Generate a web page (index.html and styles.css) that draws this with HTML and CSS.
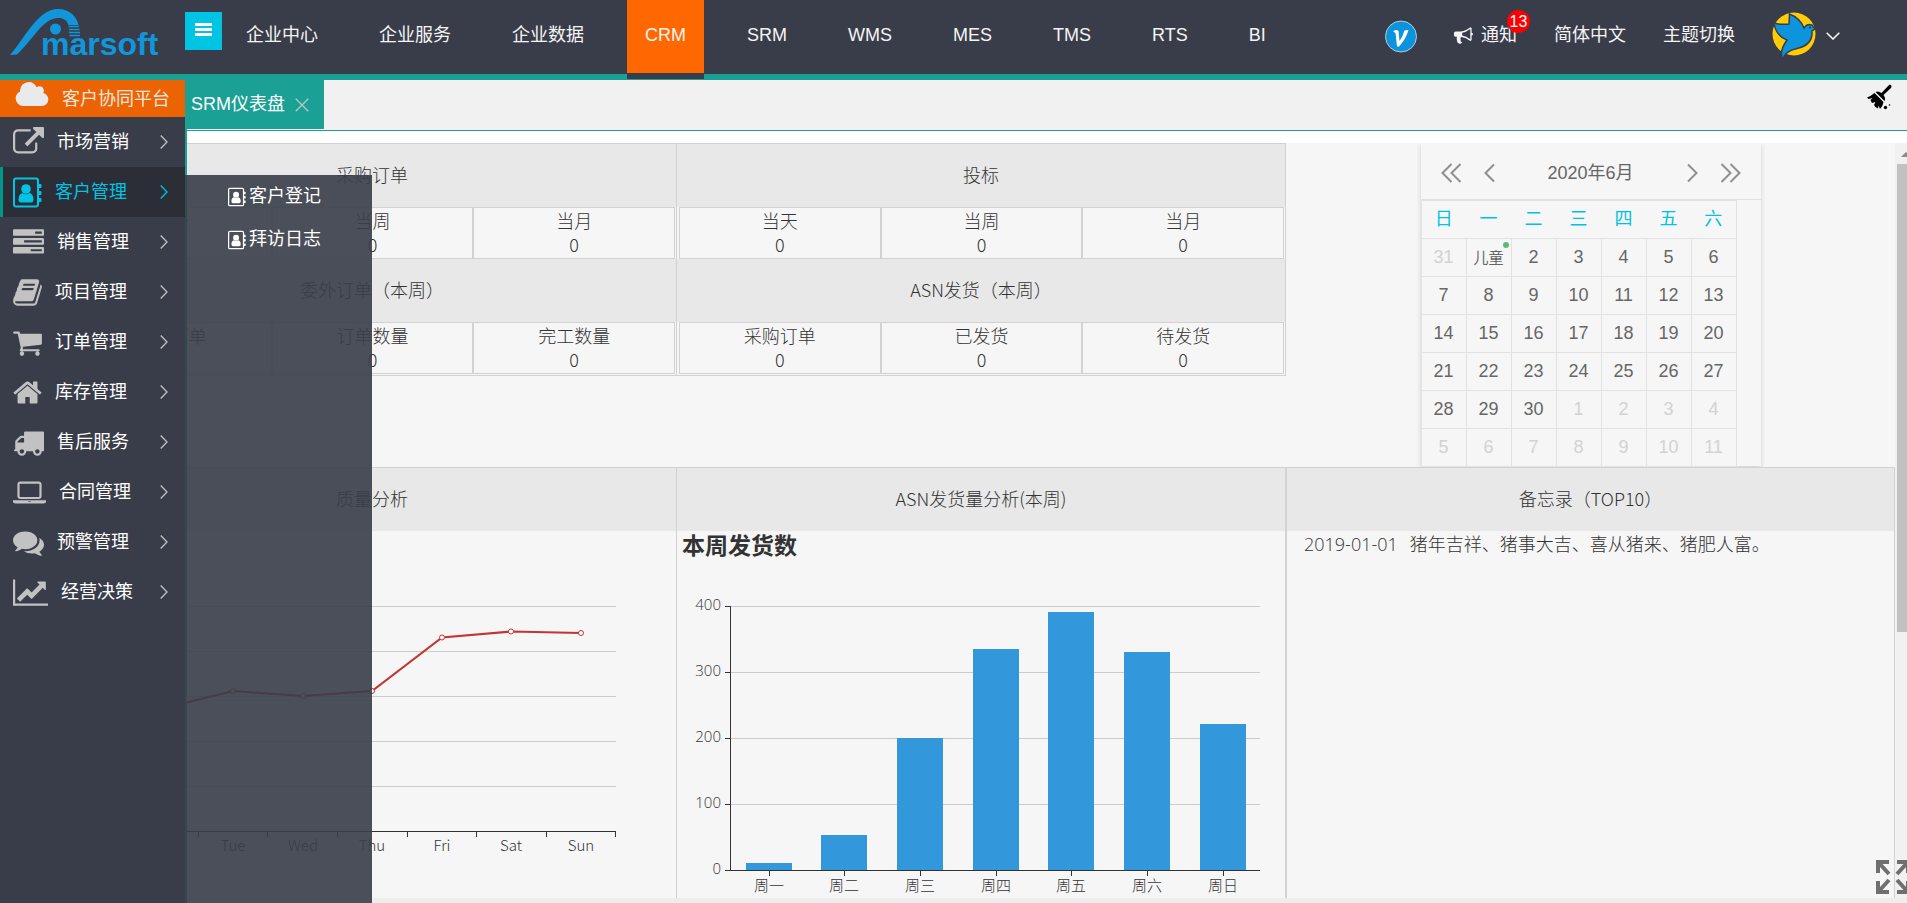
FILE: index.html
```html
<!DOCTYPE html>
<html lang="zh-CN">
<head>
<meta charset="utf-8">
<title>SRM仪表盘</title>
<link rel="stylesheet" href="styles.css">
</head>
<body>
<svg class="defs" aria-hidden="true">
  <symbol id="i-contact" viewBox="0 0 29 31">
    <rect x="1" y="1.500" width="24" height="28" rx="2" fill="none" stroke="currentColor" stroke-width="2"/>
    <path d="M25 7h2.500q1 0 1 1v2q0 1-1 1H25zM25 14h2.500q1 0 1 1v2q0 1-1 1H25zM25 21h2.500q1 0 1 1v2q0 1-1 1H25z" fill="currentColor"/>
    <circle cx="13" cy="12" r="4.800" fill="currentColor"/>
    <path d="M9.500 16q3.500 2.500 7 0q4 1 4 6.500q0 3-2.500 3h-10q-2.500 0-2.500-3q0-5.500 4-6.500z" fill="currentColor"/>
  </symbol>
  <symbol id="i-next" viewBox="0 0 8 16"><path d="M.7 1.500L7 8L.7 14.500" fill="none" stroke="currentColor" stroke-width="1.300"/></symbol>
</svg>

<header class="topbar">
  <svg class="logo" width="185" height="74" viewBox="0 0 185 74" role="img" aria-label="Amarsoft">
    <path d="M10 55C25 38 38 9 58 9C70 9 77 17 78.500 25H68.500C67 20 63 17.500 57 18C43 19 35 37 17 54.500z" fill="#1296db"/>
    <path d="M68.500 26.500h10.500M69 29.500h10.500M69 32.500h11M69.500 35.500h10.500" stroke="#1296db" stroke-width="1.600"/>
    <circle cx="55.500" cy="29" r="5.500" fill="#1296db"/>
    <text x="41" y="55" class="logo-text">marsoft</text>
  </svg>
  <button class="toggle" aria-label="折叠菜单"><span></span><span></span><span></span></button>
  <nav class="nav">
    <a href="#">企业中心</a><a href="#">企业服务</a><a href="#">企业数据</a><a href="#" class="on">CRM</a><a href="#">SRM</a><a href="#">WMS</a><a href="#">MES</a><a href="#">TMS</a><a href="#">RTS</a><a href="#">BI</a>
  </nav>
  <div class="tools">
    <svg width="32" height="34" viewBox="0 0 32 34"><circle cx="16" cy="17.500" r="15.500" fill="#0b93dd" stroke="#b9cbd6"/><path d="M8 12.500Q11.500 10 13.500 12L14.500 22Q18.500 16 19 12Q21 10.500 23.500 11Q21 20 14 27.500H12L10.500 14Z" fill="#fff"/></svg>
    <a href="#" class="notice"><svg width="19" height="19" viewBox="0 0 1792 1792"><path fill="currentColor" d="M1664 640q53 0 90.500 37.500t37.500 90.500-37.500 90.500-90.500 37.500v384q0 52-38 90t-90 38q-417-347-812-380-58 19-91 66t-31 100.500 40 92.500q-20 33-23 65.500t6 58 33.500 55 48 50 61.500 50.500q-29 58-111.500 83t-168.500 11.500-132-55.500q-7-23-29.500-87.500t-32-94.500-23-89-15-101 3.500-98.500 22-110.500h-122q-66 0-113-47t-47-113v-192q0-66 47-113t113-47h480q435 0 896-384 52 0 90 38t38 90v384zm-128 604v-954q-394 302-768 343v270q377 42 768 341z"/></svg>通知<span class="badge">13</span></a>
    <a href="#">简体中文</a>
    <a href="#">主题切换</a>
    <a href="#" class="user" aria-label="用户">
      <svg width="44" height="48" viewBox="0 0 44 48"><circle cx="22" cy="22" r="21.500" fill="#ffcc05"/><path d="M2 11Q9 13 17 12L17.500 2Q28 6 32 16Q35 11 40 13L43 17L40 19Q41 33 25 36.500Q13 39 10.500 47.500Q7 39 15 28Q4 24 2 11z" fill="#0c94dc" stroke="#393d49" stroke-width="1.500"/><circle cx="38" cy="15.500" r="1" fill="#123"/></svg>
      <svg width="14" height="8" viewBox="0 0 14 8"><path d="M.7.8L7 7L13.300.8" fill="none" stroke="#fff" stroke-width="1.500"/></svg>
    </a>
  </div>
</header>

<div class="body">
  <aside class="side">
    <h1 class="platform"><svg width="34" height="24" viewBox="0 128 1920 1408"><path fill="#e8eaee" d="M1920 1152q0 159-112.500 271.500t-271.500 112.500h-1088q-185 0-316.500-131.500t-131.500-316.500q0-130 70-240t188-165q-2-30-2-43 0-212 150-362t362-150q156 0 283.500 87t185.500 225q71-62 166-62 106 0 181 75t75 181q0 76-41 138 130 31 213.500 135.500t88.500 251.500z"/></svg>客户协同平台</h1>
    <nav class="menu">
      <a href="#"><svg width="31" height="31" viewBox="0 0 1792 1792"><path fill="currentColor" d="M1408 928v320q0 119-84.500 203.500t-203.500 84.500h-832q-119 0-203.500-84.500t-84.500-203.500v-832q0-119 84.500-203.500t203.500-84.500h704q14 0 23 9t9 23v64q0 14-9 23t-23 9h-704q-66 0-113 47t-47 113v832q0 66 47 113t113 47h832q66 0 113-47t47-113v-320q0-14 9-23t23-9h64q14 0 23 9t9 23zm384-864v512q0 26-19 45t-45 19-45-19l-176-176-652 652q-10 10-23 10t-23-10l-114-114q-10-10-10-23t10-23l652-652-176-176q-19-19-19-45t19-45 45-19h512q26 0 45 19t19 45z"/></svg><span>市场营销</span><svg class="next"><use href="#i-next"/></svg></a>
      <a href="#" class="on"><svg width="29" height="31"><use href="#i-contact"/></svg><span>客户管理</span><svg class="next"><use href="#i-next"/></svg></a>
      <a href="#"><svg width="31" height="31" viewBox="0 0 1792 1792"><path fill="currentColor" d="M1024 1408h640v-128h-640v128zm-384-512h1024v-128h-1024v128zm640-512h384v-128h-384v128zm512 832v256q0 26-19 45t-45 19h-1664q-26 0-45-19t-19-45v-256q0-26 19-45t45-19h1664q26 0 45 19t19 45zm0-512v256q0 26-19 45t-45 19h-1664q-26 0-45-19t-19-45v-256q0-26 19-45t45-19h1664q26 0 45 19t19 45zm0-512v256q0 26-19 45t-45 19h-1664q-26 0-45-19t-19-45v-256q0-26 19-45t45-19h1664q26 0 45 19t19 45z"/></svg><span>销售管理</span><svg class="next"><use href="#i-next"/></svg></a>
      <a href="#"><svg width="29" height="31" viewBox="64 0 1664 1792"><path fill="currentColor" d="M1703 478q40 57 18 129l-275 906q-19 64-76.500 107.500t-122.500 43.500h-923q-77 0-148.500-53.500t-99.500-131.500q-24-67-2-127 0-4 3-27t4-37q1-8-3-21.500t-3-19.500q2-11 8-21t16.500-23.500 16.500-23.500q23-38 45-91.500t30-91.500q3-10 .5-30t-.5-28q3-11 17-28t17-23q21-36 42-92t25-90q1-9-2.500-32t.5-28q4-13 22-30.500t22-22.500q19-26 42.500-84.500t27.500-96.500q1-8-3-25.500t-2-26.500q2-8 9-18t18-23 17-21q8-12 16.500-30.500t15-35 16-36 19.500-32 26.500-23.500 36-11.500 47.500 5.500l-1 3q38-9 51-9h761q74 0 114 56t18 130l-274 906q-36 119-71.500 153.500t-128.500 34.500h-869q-27 0-38 15-11 16-1 43 24 70 144 70h923q29 0 56-15.500t35-41.500l300-987q7-22 5-57 38 15 59 43zm-1064 2q-4 13 2 22.500t20 9.500h608q13 0 25.500-9.500t16.500-22.500l21-64q4-13-2-22.500t-20-9.500h-608q-13 0-25.500 9.500t-16.500 22.500zm-83 256q-4 13 2 22.500t20 9.500h608q13 0 25.500-9.500t16.500-22.500l21-64q4-13-2-22.500t-20-9.500h-608q-13 0-25.500 9.500t-16.500 22.500z"/></svg><span>项目管理</span><svg class="next"><use href="#i-next"/></svg></a>
      <a href="#"><svg width="29" height="31" viewBox="64 0 1664 1792"><path fill="currentColor" d="M704 1536q0 52-38 90t-90 38-90-38-38-90 38-90 90-38 90 38 38 90zm896 0q0 52-38 90t-90 38-90-38-38-90 38-90 90-38 90 38 38 90zm128-1088v512q0 24-16.500 42.500t-40.500 21.500l-1044 122q13 60 13 70 0 16-24 64h920q26 0 45 19t19 45-19 45-45 19h-1024q-26 0-45-19t-19-45q0-11 8-31.500t16-36 21.500-40 15.500-29.500l-177-823h-204q-26 0-45-19t-19-45 19-45 45-19h256q16 0 28.500 6.500t19.500 15.500 13 24.500 8 26 5.500 29.500 4.500 26h1201q26 0 45 19t19 45z"/></svg><span>订单管理</span><svg class="next"><use href="#i-next"/></svg></a>
      <a href="#"><svg width="29" height="31" viewBox="64 0 1664 1792"><path fill="currentColor" d="M1472 992v480q0 26-19 45t-45 19h-384v-384h-256v384h-384q-26 0-45-19t-19-45v-480q0-1 .5-3t.5-3l575-474 575 474q1 2 1 6zm223-69l-62 74q-8 9-21 11h-3q-13 0-21-7l-692-577-692 577q-12 8-24 7-13-2-21-11l-62-74q-8-10-7-23.500t11-21.500l719-599q32-26 76-26t76 26l244 204v-195q0-14 9-23t23-9h192q14 0 23 9t9 23v408l219 182q10 8 11 21.500t-7 23.500z"/></svg><span>库存管理</span><svg class="next"><use href="#i-next"/></svg></a>
      <a href="#"><svg width="31" height="31" viewBox="0 0 1792 1792"><path fill="currentColor" d="M640 1408q0-52-38-90t-90-38-90 38-38 90 38 90 90 38 90-38 38-90zm-384-512h384v-256h-158q-13 0-22 9l-195 195q-9 9-9 22v30zm1280 512q0-52-38-90t-90-38-90 38-38 90 38 90 90 38 90-38 38-90zm256-1088v1024q0 15-4 26.500t-13.500 18.500-16.500 11.500-23.500 6-22.500 2-25.500 0-22.500-.5q0 106-75 181t-181 75-181-75-75-181h-384q0 106-75 181t-181 75-181-75-75-181h-64q-3 0-22.500.5t-25.500 0-22.500-2-23.500-6-16.500-11.500-13.500-18.500-4-26.500q0-26 19-45t45-19v-320q0-8-.5-35t0-38 2.500-34.500 6.500-37 14-30.500 22.500-30l198-198q19-19 50.500-32t58.500-13h160v-192q0-26 19-45t45-19h1024q26 0 45 19t19 45z"/></svg><span>售后服务</span><svg class="next"><use href="#i-next"/></svg></a>
      <a href="#"><svg width="33" height="31" viewBox="0 0 1920 1792"><path fill="currentColor" d="M416 1280q-66 0-113-47t-47-113v-704q0-66 47-113t113-47h1088q66 0 113 47t47 113v704q0 66-47 113t-113 47h-1088zm-32-864v704q0 13 9.500 22.500t22.500 9.500h1088q13 0 22.500-9.500t9.500-22.500v-704q0-13-9.500-22.500t-22.500-9.500h-1088q-13 0-22.500 9.500t-9.500 22.500zm1376 928h160v96q0 40-47 68t-113 28h-1600q-66 0-113-28t-47-68v-96h1760zm-720 96q16 0 16-16t-16-16h-160q-16 0-16 16t16 16h160z"/></svg><span>合同管理</span><svg class="next"><use href="#i-next"/></svg></a>
      <a href="#"><svg width="31" height="31" viewBox="0 0 1792 1792"><path fill="currentColor" d="M1408 768q0 139-94 257t-256.500 186.500-353.500 68.500q-86 0-176-16-124 88-278 128-36 9-86 16h-3q-11 0-20.500-8t-11.500-21q-1-3-1-6.500t.5-6.500 2-6l2.500-5 3.500-5.500 4-5 4.500-5 4-4.500q5-6 23-25t26-29.500 22.500-29 25-38.500 20.500-44q-124-72-195-177t-71-224q0-139 94-257t256.500-186.500 353.500-68.500 353.500 68.500 256.500 186.500 94 257zm384 256q0 120-71 224.500t-195 176.500q10 24 20.500 44t25 38.500 22.500 29 26 29.500 23 25q1 1 4 4.500t4.500 5 4 5 3.500 5.500l2.500 5 2 6 .5 6.500-1 6.500q-3 14-13 22t-22 7q-50-7-86-16-154-40-278-128-90 16-176 16-271 0-472-132 58 4 88 4 161 0 309-45t264-129q125-92 192-212t67-254q0-77-23-152 129 71 204 178t75 230z"/></svg><span>预警管理</span><svg class="next"><use href="#i-next"/></svg></a>
      <a href="#"><svg width="35" height="31" viewBox="0 0 2048 1792"><path fill="currentColor" d="M2048 1536v128h-2048v-1536h128v1408h1920zm-128-1248v435q0 21-19.500 29.500t-35.500-7.500l-121-121-633 633q-10 10-23 10t-23-10l-233-233-416 416-192-192 585-585q10-10 23-10t23 10l233 233 464-464-121-121q-16-16-7.500-35.500t29.500-19.500h435q14 0 23 9t9 23z"/></svg><span>经营决策</span><svg class="next"><use href="#i-next"/></svg></a>
    </nav>
    <div class="submenu">
      <a href="#"><svg width="18" height="20"><use href="#i-contact"/></svg>客户登记</a>
      <a href="#"><svg width="18" height="20"><use href="#i-contact"/></svg>拜访日志</a>
    </div>
  </aside>

  <main class="main">
    <div class="tabs">
      <div class="tab">SRM仪表盘<button aria-label="关闭"><svg width="14" height="14" viewBox="0 0 14 14"><path d="M.7.7l12.600 12.600M13.300.7L.7 13.300" stroke="#b7c9c6" stroke-width="1.300"/></svg></button></div>
      <button class="clean" aria-label="清理"><svg width="25" height="26" viewBox="0 0 25 26"><path d="M22.500.5Q25.500 1 24 4L16.500 11Q19 14 17.500 17L8.500 8Q11.500 6.500 14.500 9z"/><path d="M7.500 9L16.500 18Q16 22 13 25L11.500 21.500L11 24.500Q8 23.500 7 21L8.500 18L5 19L3.500 16L5.500 14L1.500 15L0 13.500Q4 12 7.500 9z"/><circle cx="18.500" cy="23.500" r="1.700"/><circle cx="22.500" cy="21" r=".8"/></svg></button>
    </div>
    <div class="view">
      <div class="board">
        <section class="top">
          <div class="stats">
            <h2>采购订单</h2>
            <div class="cells"><p>当天<br>0</p><p>当周<br>0</p><p>当月<br>0</p></div>
            <h2>委外订单（本周）</h2>
            <div class="cells"><p>委外订单<br>0</p><p>订单数量<br>0</p><p>完工数量<br>0</p></div>
          </div>
          <div class="stats">
            <h2>投标</h2>
            <div class="cells"><p>当天<br>0</p><p>当周<br>0</p><p>当月<br>0</p></div>
            <h2>ASN发货（本周）</h2>
            <div class="cells"><p>采购订单<br>0</p><p>已发货<br>0</p><p>待发货<br>0</p></div>
          </div>
          <div class="calendar">
            <div class="cal-head">
              <button aria-label="上一年"><svg width="21" height="20" viewBox="0 0 21 20"><path d="M10.500 1L1.500 10L10.500 19M19.500 1L10.500 10L19.500 19"/></svg></button>
              <button aria-label="上一月"><svg width="11" height="20" viewBox="0 0 11 20"><path d="M10 1.500L1.500 10L10 18.500"/></svg></button>
              <span>2020年6月</span>
              <button aria-label="下一月"><svg width="11" height="20" viewBox="0 0 11 20"><path d="M1 1.500L9.500 10L1 18.500"/></svg></button>
              <button aria-label="下一年"><svg width="21" height="20" viewBox="0 0 21 20"><path d="M1.500 1L10.500 10L1.500 19M10.500 1L19.500 10L10.500 19"/></svg></button>
            </div>
            <table>
              <thead><tr><th>日</th><th>一</th><th>二</th><th>三</th><th>四</th><th>五</th><th>六</th></tr></thead>
              <tbody>
                <tr><td class="off">31</td><td class="fest">儿童<i></i></td><td>2</td><td>3</td><td>4</td><td>5</td><td>6</td></tr>
                <tr><td>7</td><td>8</td><td>9</td><td>10</td><td>11</td><td>12</td><td>13</td></tr>
                <tr><td>14</td><td>15</td><td>16</td><td>17</td><td>18</td><td>19</td><td>20</td></tr>
                <tr><td>21</td><td>22</td><td>23</td><td>24</td><td>25</td><td>26</td><td>27</td></tr>
                <tr><td>28</td><td>29</td><td>30</td><td class="off">1</td><td class="off">2</td><td class="off">3</td><td class="off">4</td></tr>
                <tr><td class="off">5</td><td class="off">6</td><td class="off">7</td><td class="off">8</td><td class="off">9</td><td class="off">10</td><td class="off">11</td></tr>
              </tbody>
            </table>
          </div>
        </section>
        <section class="bottom">
          <div class="panel">
            <h2>质量分析</h2>
            <svg class="chart" width="606" height="366" viewBox="2 0 606 366">
              <path class="grid" d="M60 75.500H550M60 120.500H550M60 165.500H550M60 210.500H550M60 255.500H550"/>
              <path class="axis" d="M60 300.500H550M132.500 300v6M201.500 300v6M271.500 300v6M341.500 300v6M410.500 300v6M480.500 300v6M549.500 300v6"/>
              <polyline points="98,177 167,160 237,165 306,160 376,106.500 445,100.500 515,102" fill="none" stroke="#c23531" stroke-width="2.200"/>
              <g fill="#fff" stroke="#c23531"><circle cx="98" cy="177" r="2.500"/><circle cx="167" cy="160" r="2.500"/><circle cx="237" cy="165" r="2.500"/><circle cx="306" cy="160" r="2.500"/><circle cx="376" cy="106.500" r="2.500"/><circle cx="445" cy="100.500" r="2.500"/><circle cx="515" cy="102" r="2.500"/></g>
              <g class="mid"><text x="98" y="320">Mon</text><text x="167" y="320">Tue</text><text x="237" y="320">Wed</text><text x="306" y="320">Thu</text><text x="376" y="320">Fri</text><text x="445" y="320">Sat</text><text x="515" y="320">Sun</text></g>
            </svg>
          </div>
          <div class="panel">
            <h2>ASN发货量分析(本周)</h2>
            <svg class="chart" width="607" height="366" viewBox="1 0 607 366">
              <text class="title" x="6" y="23">本周发货数</text>
              <path class="grid" d="M54 75.500H584M54 141.500H584M54 207.500H584M54 273.500H584"/>
              <g fill="#3398db"><rect x="70" y="332" width="46" height="7"/><rect x="145" y="304" width="46" height="35"/><rect x="221" y="207" width="46" height="132"/><rect x="297" y="118" width="46" height="221"/><rect x="372" y="81" width="46" height="258"/><rect x="448" y="121" width="46" height="218"/><rect x="524" y="193" width="46" height="146"/></g>
              <path class="axis" d="M54.500 75V339M49 75.500h5M49 141.500h5M49 207.500h5M49 273.500h5M49 339.500H584M93.500 339v6M168.500 339v6M244.500 339v6M320.500 339v6M395.500 339v6M471.500 339v6M547.500 339v6"/>
              <g class="end"><text x="45" y="79">400</text><text x="45" y="145">300</text><text x="45" y="211">200</text><text x="45" y="277">100</text><text x="45" y="343">0</text></g>
              <g class="mid"><text x="93" y="360">周一</text><text x="168" y="360">周二</text><text x="244" y="360">周三</text><text x="320" y="360">周四</text><text x="395" y="360">周五</text><text x="471" y="360">周六</text><text x="547" y="360">周日</text></g>
            </svg>
          </div>
          <div class="panel">
            <h2>备忘录（TOP10）</h2>
            <p class="memo"><time>2019-01-01</time>猪年吉祥、猪事大吉、喜从猪来、猪肥人富。</p>
          </div>
        </section>
      </div>
      <div class="scrollbar"><span class="up"></span><span class="thumb"></span></div>
      <button class="expand" aria-label="全屏"><svg width="34" height="34" viewBox="0 0 34 34"><g fill="none" stroke="#6f6f6f" stroke-width="4"><path d="M2 13V2H13M3 3L13 14M21 2H32V13M31 3L21 14M2 21V32H13M3 31L13 20M21 32H32V21M31 31L21 20"/></g></svg></button>
    </div>
  </main>
</div>
</body>
</html>
```
FILE: styles.css
```css
* { box-sizing: border-box; margin: 0; padding: 0; }
body {
  height: 100vh; display: flex; flex-direction: column; overflow: hidden;
  font: 18px/25px "Liberation Sans", "Noto Sans CJK SC", sans-serif;
  color: #333; background: #fff;
}
a { color: inherit; text-decoration: none; }
button { border: 0; background: none; font: inherit; cursor: pointer; }
svg { flex: none; display: block; }
.defs { position: absolute; width: 0; height: 0; }

.topbar { flex: none; height: 80px; display: flex; background: #393d49; border-bottom: 6px solid #1aa094; color: #f4f4f5; }
.logo-text { font: bold 32px "Liberation Sans", sans-serif; fill: #1296db; }
.toggle { width: 37px; height: 38px; margin-top: 12px; background: #00c4e3; display: flex; flex-direction: column; align-items: center; gap: 2px; padding-top: 11px; }
.toggle span { width: 17px; height: 3px; background: #fff; }
.nav { display: flex; gap: 25px; margin-left: 6px; }
.nav a { height: 79px; padding: 0 18px; line-height: 71px; border-bottom: 6px solid transparent; white-space: nowrap; }
.nav .on { background: #ff6700 padding-box; border-color: #393d49; position: relative; }
.tools { margin-left: auto; display: flex; gap: 37px; padding-right: 67px; height: 71px; align-items: center; white-space: nowrap; }
.notice { position: relative; display: flex; align-items: center; gap: 8px; }
.badge { position: absolute; left: 53px; top: -13px; width: 23px; height: 23px; border-radius: 50%; background: #f00; color: #fff; font-size: 16px; line-height: 23px; text-align: center; }
.user { display: flex; align-items: center; gap: 10px; }

.body { flex: 1; min-height: 0; display: flex; }
.side { position: relative; z-index: 2; width: 185px; flex: none; background: #393d49; }
.platform { height: 37px; display: flex; gap: 13px; align-items: flex-start; padding: 2px 0 0 15px; background: #ec6304; color: #f4e6dc; font-size: 18px; font-weight: 400; line-height: 35px; white-space: nowrap; }
.menu a { height: 50px; display: flex; align-items: center; gap: 13px; padding: 0 17px 0 13px; color: #c2c2c2; }
.menu span { flex: 1; color: #fff; white-space: nowrap; }
.menu .on { background: #2b2e37; color: #00c4e3; border-left: 3px solid #009688; padding-left: 10px; }
.menu .on span { color: #00c4e3; }
.next { width: 8px; height: 16px; }
.submenu { position: absolute; left: 185px; top: 95px; bottom: 0; width: 187px; background: rgba(57, 61, 73, .9); color: #fff; }
.submenu a { height: 43px; display: flex; align-items: center; justify-content: center; gap: 3px; padding-right: 8px; }

.main { flex: 1; min-width: 0; display: flex; flex-direction: column; border-left: 2px solid #1aa094; }
.tabs { height: 51px; flex: none; display: flex; justify-content: space-between; align-items: flex-start; background: #f1f1f1; border-bottom: 1px solid #1aa094; }
.tab { height: 50px; width: 137px; padding: 0 15px 0 4px; display: flex; align-items: center; justify-content: space-between; background: #1aa094; color: #fff; border-bottom: 1px solid #fff; white-space: nowrap; }
.clean { padding: 4px 15px 0 0; }

.view { position: relative; flex: 1; min-height: 0; display: flex; margin-top: 12px; border-bottom: 5px solid #ededed; background: #f6f6f6; overflow: hidden; }
.board { flex: 1; margin-left: -119px; display: flex; flex-direction: column; font-family: "Noto Sans CJK SC", sans-serif; font-weight: 300; }
.top { display: grid; grid-template-columns: repeat(3, 1fr); height: 324px; align-items: start; flex: none; }
.stats { border: 1px solid #d2d2d2; border-left: 0; padding-bottom: 1px; }
h2 { height: 63px; font-size: 18px; font-weight: 300; line-height: 61px; text-align: center; background: #e8e8e8; }
.cells { display: grid; grid-template-columns: repeat(3, 1fr); padding: 0 1px 0 2px; }
.cells p { height: 52px; border: 1px solid #d2d2d2; text-align: center; line-height: 24px; }

.calendar { width: 340px; height: 323px; justify-self: center; box-shadow: 0 2px 5px rgba(0, 0, 0, .16); font-family: "Liberation Sans", "Noto Sans CJK SC", sans-serif; font-weight: 400; color: #666; }
.cal-head { height: 57px; padding: 4px 20px 0; border-bottom: 1px solid #e2e2e2; display: flex; align-items: center; gap: 22px; }
.cal-head span { flex: 1; text-align: center; }
.cal-head path { fill: none; stroke: #8f8f8f; stroke-width: 2; }
table { border-collapse: collapse; table-layout: fixed; width: 316px; border: 1px solid #e2e2e2; }
th, td { height: 38px; text-align: center; vertical-align: middle; line-height: 25px; }
th { font-weight: 400; color: #00c4de; }
td { border: 1px solid #e2e2e2; }
.off { color: #d2d2d2; }
.fest { position: relative; font-size: 15px; }
.fest i { position: absolute; right: 2px; top: 3px; width: 6px; height: 6px; border-radius: 50%; background: #5fb878; }

.bottom { flex: 1; min-height: 0; display: grid; grid-template-columns: repeat(3, 1fr); border-top: 1px solid #d2d2d2; }
.panel { min-width: 0; overflow: hidden; border-right: 1px solid #d2d2d2; }
.panel + .panel + .panel { border-left: 1px solid #d2d2d2; }
.chart text { font-size: 15px; fill: #333; }
.chart .title { font-size: 23px; font-weight: 700; }
.mid { text-anchor: middle; }
.end { text-anchor: end; font-family: "Open Sans", "Noto Sans", sans-serif; }
.grid { stroke: #ccc; }
.axis { stroke: #333; fill: none; }
.memo { padding-left: 17px; line-height: 24px; }
.memo time { margin-right: 12px; font-family: "Open Sans", "Noto Sans", sans-serif; }

.scrollbar { width: 12px; flex: none; background: #f1f1f1; display: flex; flex-direction: column; }
.up { margin: 9px 0 7px 6px; border: 5px solid transparent; border-top: 0; border-bottom: 5px solid #8c8c8c; width: 10px; }
.thumb { margin-left: 2px; height: 62%; background: #c1c1c1; }
.expand { position: absolute; left: calc(100% - 31px); bottom: 4px; }
```
